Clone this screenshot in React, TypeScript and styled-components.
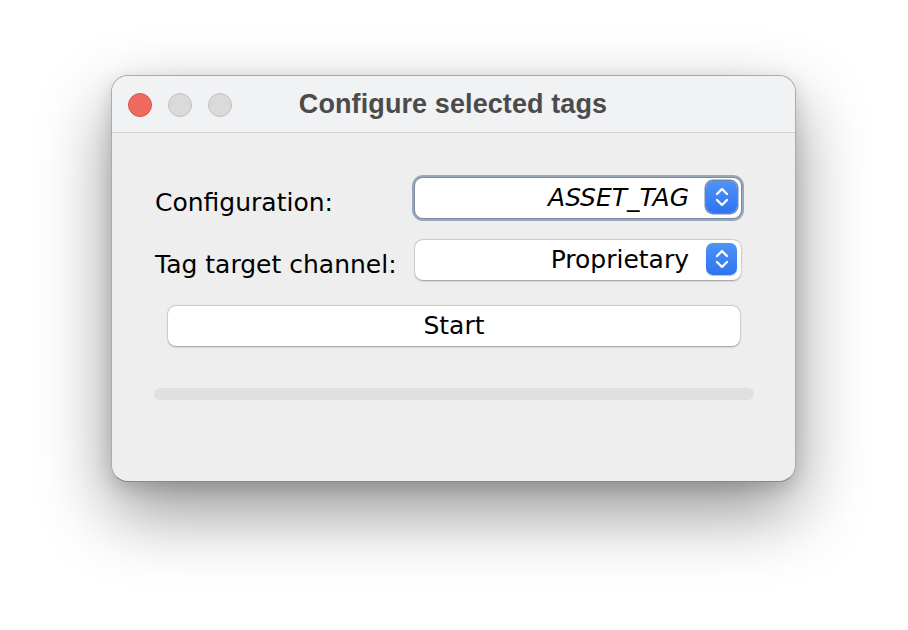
import React from "react";
import styled, { createGlobalStyle } from "styled-components";

const Global = createGlobalStyle`
  html, body { margin: 0; padding: 0; background: #ffffff; }
  body { width: 908px; height: 630px; overflow: hidden; }
`;

const Stage = styled.div`
  padding: 75px 0 0 111px;
`;

const Window = styled.div`
  width: 685px;
  height: 407px;
  box-sizing: border-box;
  border: 1px solid rgba(0, 0, 0, 0.28);
  border-bottom-color: rgba(0, 0, 0, 0.42);
  border-radius: 17px;
  overflow: hidden;
  background: #eeeeee;
  box-shadow: 0 30px 70px rgba(0, 0, 0, 0.42), 0 6px 18px rgba(0, 0, 0, 0.14);
  display: flex;
  flex-direction: column;
`;

const TitleBar = styled.div`
  height: 56px;
  flex: none;
  background: #f1f2f4;
  border-bottom: 1px solid #d2d2d4;
  display: grid;
  grid-template-columns: 1fr auto 1fr;
  align-items: center;
`;

const Lights = styled.div`
  display: flex;
  gap: 16px;
  padding-left: 16px;
  margin-top: 1px;
`;

const Light = styled.span<{ $color: string; $edge: string }>`
  width: 24px;
  height: 24px;
  box-sizing: border-box;
  border-radius: 50%;
  background: ${(p) => p.$color};
  border: 1px solid ${(p) => p.$edge};
`;

const Title = styled.div`
  font-family: "Liberation Sans", Arial, sans-serif;
  font-weight: 700;
  font-size: 27px;
  color: #4b4b4b;
  letter-spacing: 0.1px;
  margin-left: -1px;
`;

const Body = styled.div`
  flex: 1;
  padding: 45px 41px 0 42px;
  display: flex;
  flex-direction: column;
  font-family: "DejaVu Sans", Verdana, sans-serif;
  font-size: 25px;
  color: #000;
`;

const FormGrid = styled.div`
  margin: 0 13px 0 1px;
  display: grid;
  grid-template-columns: 1fr 326px;
  row-gap: 22px;
  align-items: center;
`;

const Label = styled.div`
  padding-top: 9px;
  white-space: nowrap;
`;

const Combo = styled.div<{ $focused?: boolean }>`
  height: 40px;
  box-sizing: border-box;
  border-radius: 8px;
  background: #ffffff;
  display: flex;
  align-items: center;
  justify-content: flex-end;
  gap: 17px;
  padding-right: 4px;
  box-shadow: ${(p) =>
    p.$focused
      ? "0 0 0 1px #7b8aa0, 0 0 0 3px #9aa7ba"
      : "0 0.5px 2px rgba(0,0,0,0.32), 0 0 0 0.5px rgba(0,0,0,0.12)"};
`;

const ComboText = styled.span<{ $italic?: boolean }>`
  font-style: ${(p) => (p.$italic ? "italic" : "normal")};
  white-space: nowrap;
  margin-top: -2px;
`;

const Stepper = styled.span<{ $focused?: boolean }>`
  width: 31px;
  height: 32px;
  border-radius: 7px;
  margin-top: -2px;
  background: linear-gradient(#4d93f8, #2f74ee);
  display: flex;
  align-items: center;
  justify-content: center;
  box-shadow: ${(p) =>
    p.$focused ? "0 0 0 1.5px #6f86a8" : "0 0.5px 1px rgba(0,0,0,0.25)"};
`;

const StartButton = styled.div`
  margin: 26px 14px 0 14px;
  height: 40px;
  border-radius: 8px;
  background: #ffffff;
  box-shadow: 0 0.5px 2px rgba(0, 0, 0, 0.32), 0 0 0 0.5px rgba(0, 0, 0, 0.12);
  display: flex;
  align-items: center;
  justify-content: center;
  padding-bottom: 2px;
  box-sizing: border-box;
`;

const Progress = styled.div`
  margin-top: 42px;
  height: 12px;
  border-radius: 6px;
  background: #e0e0e0;
`;

const Chevrons = () => (
  <svg width="30" height="32" viewBox="0 0 30 32">
    <path
      d="M10 13 L15 8 L20 13 M10 19 L15 24 L20 19"
      fill="none"
      stroke="#ffffff"
      strokeWidth="2.3"
      strokeLinecap="round"
      strokeLinejoin="round"
    />
  </svg>
);

export default function App() {
  return (
    <>
      <Global />
      <Stage>
        <Window>
          <TitleBar>
            <Lights>
              <Light $color="#ee6a5f" $edge="#d5574c" />
              <Light $color="#dadadb" $edge="#c2c2c4" />
              <Light $color="#dadadb" $edge="#c2c2c4" />
            </Lights>
            <Title>Configure selected tags</Title>
            <div />
          </TitleBar>
          <Body>
            <FormGrid>
              <Label>Configuration:</Label>
              <Combo $focused>
                <ComboText $italic>ASSET_TAG</ComboText>
                <Stepper $focused>
                  <Chevrons />
                </Stepper>
              </Combo>
              <Label>Tag target channel:</Label>
              <Combo>
                <ComboText>Proprietary</ComboText>
                <Stepper>
                  <Chevrons />
                </Stepper>
              </Combo>
            </FormGrid>
            <StartButton>Start</StartButton>
            <Progress />
          </Body>
        </Window>
      </Stage>
    </>
  );
}
